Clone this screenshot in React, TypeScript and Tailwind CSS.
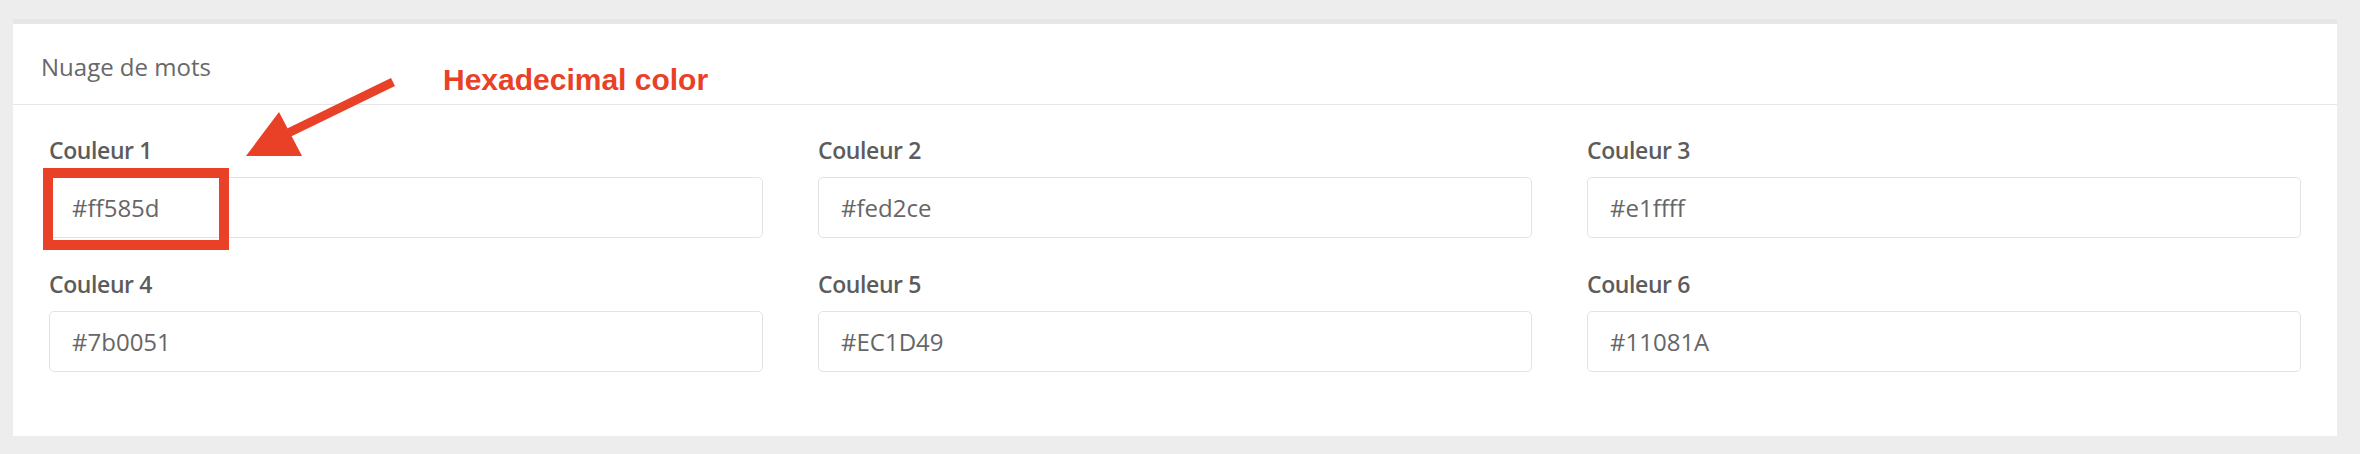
const colors = [
  { label: "Couleur 1", value: "#ff585d" },
  { label: "Couleur 2", value: "#fed2ce" },
  { label: "Couleur 3", value: "#e1ffff" },
  { label: "Couleur 4", value: "#7b0051" },
  { label: "Couleur 5", value: "#EC1D49" },
  { label: "Couleur 6", value: "#11081A" },
];

const ColorField = ({ label, value }: { label: string; value: string }) => {
  return (
    <div className="flex flex-col">
      <label className="text-[23px] leading-[24px] font-semibold tracking-[-0.4px] text-[#5c5c5c] mb-[15px]">
        {label}
      </label>
      <div className="h-[61px] border border-[#e3e3e3] rounded-[5px] flex items-center pl-[22px] text-[24px] text-[#666666]">
        {value}
      </div>
    </div>
  );
};

export default function App() {
  return (
    <div
      className="relative w-full h-[454px] bg-[#ededed] pt-[19px] pl-[13px] pr-[23px]"
      style={{ fontFamily: "'Open Sans', Lato, sans-serif" }}
    >
      <div className="h-[417px] bg-white border-t-[5px] border-[#e6e6e6]">
        <div className="h-[81px] border-b border-[#e6e6e6] pl-[28px] pt-[31px]">
          <h2 className="text-[24px] leading-[24px] text-[#686868]">Nuage de mots</h2>
        </div>
        <div className="grid grid-cols-3 gap-x-[55px] gap-y-[34px] px-[36px] pt-[33px]">
          {colors.map((c) => (
            <ColorField key={c.label} label={c.label} value={c.value} />
          ))}
        </div>
      </div>

      {/* annotation overlay */}
      <div className="absolute left-[43px] top-[168px] w-[186px] h-[82px] border-[10px] border-[#e94128]" />
      <svg
        className="absolute inset-0 pointer-events-none"
        width="2360"
        height="454"
        viewBox="0 0 2360 454"
      >
        <line x1="393" y1="82" x2="284" y2="135" stroke="#e94128" strokeWidth="9" />
        <polygon points="279,112 246,156 302,156" fill="#e94128" />
      </svg>
      <div
        className="absolute left-[443px] top-[65px] text-[30px] leading-[30px] font-bold text-[#e94128]"
        style={{ fontFamily: "'Liberation Sans', Arial, sans-serif" }}
      >
        Hexadecimal color
      </div>
    </div>
  );
}
